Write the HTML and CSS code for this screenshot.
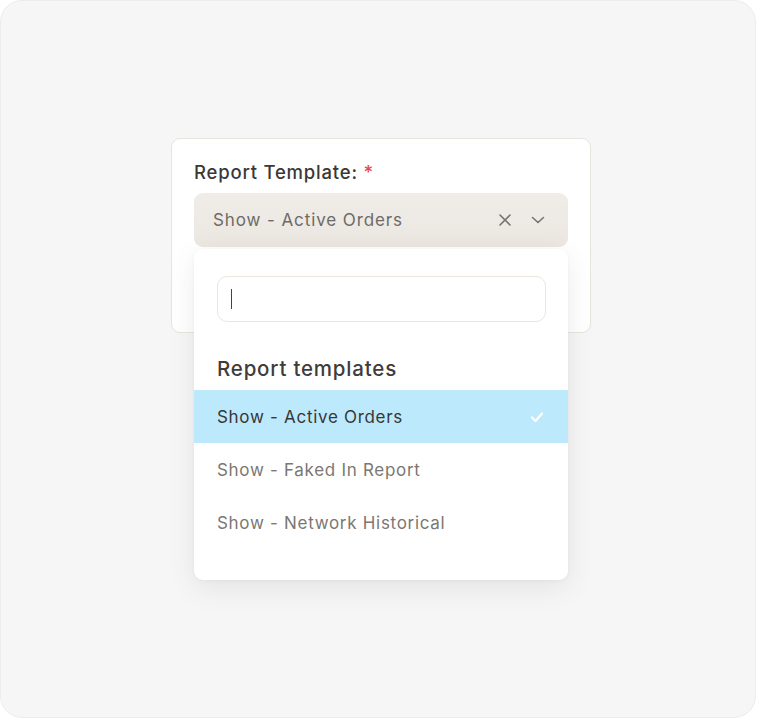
FILE: index.html
```html
<!DOCTYPE html>
<html>
  <head>
    <meta charset="utf-8">
    <link rel="stylesheet" href="styles.css">
  </head>
  <body>
    <div class="frame">
      <div class="field-card">
        <label class="field-label">Report Template: <span class="req">*</span></label>
        <div class="select">
          <span class="select-value">Show - Active Orders</span>
          <span class="select-icons">
            <svg width="14" height="14" viewBox="0 0 14 14"><path d="M2 2 L12 12 M12 2 L2 12" stroke="#77726d" stroke-width="1.6" fill="none" stroke-linecap="round"/></svg>
            <svg width="16" height="16" viewBox="0 0 16 16"><path d="M2.5 5.5 L8 10.5 L13.5 5.5" stroke="#77726d" stroke-width="1.6" fill="none" stroke-linecap="round" stroke-linejoin="round"/></svg>
          </span>
        </div>
        <div class="menu">
          <div class="search"><span class="caret"></span></div>
          <div class="group-title">Report templates</div>
          <div class="option selected">
            <span>Show - Active Orders</span>
            <svg width="14" height="12" viewBox="0 0 14 12"><path d="M2 6.5 L5.5 10 L12 2.5" stroke="#fff" stroke-width="2.2" fill="none" stroke-linecap="round" stroke-linejoin="round"/></svg>
          </div>
          <div class="option">Show - Faked In Report</div>
          <div class="option">Show - Network Historical</div>
        </div>
      </div>
    </div>
  </body>
</html>
```

FILE: styles.css
```css
body {
  margin: 0;
  background: #fff;
  font-family: Inter, "Noto Sans", sans-serif;
}

.frame {
  width: 756px;
  height: 718px;
  background: #f6f6f6;
  border: 1px solid #ececec;
  border-radius: 22px;
  padding-top: 137px;
  box-sizing: border-box;
}

.field-card {
  position: relative;
  width: 420px;
  height: 195px;
  margin-left: 170px;
  background: #fff;
  border: 1px solid #e8e4de;
  border-radius: 9px;
  box-sizing: border-box;
  padding: 22px 22px 0 22px;
}

.field-label {
  display: block;
  font-size: 18.5px;
  font-weight: 500;
  letter-spacing: 0.8px;
  color: #3b3836;
  margin-bottom: 10px;
  line-height: 22px;
}

.req {
  color: #e5484d;
}

.select {
  display: flex;
  align-items: center;
  justify-content: space-between;
  height: 54px;
  padding: 0 22px 0 19px;
  border-radius: 9px;
  background: linear-gradient(#f0ede9, #ebe6e0);
}

.select-value {
  font-size: 17px;
  letter-spacing: 0.9px;
  color: #6e6a66;
}

.select-icons {
  display: flex;
  align-items: center;
  gap: 18px;
}

.menu {
  position: absolute;
  left: 22px;
  top: 110px;
  width: 374px;
  height: 331px;
  background: #fff;
  border-radius: 9px;
  box-shadow: 0 8px 30px rgba(0, 0, 0, 0.08), 0 1px 4px rgba(0, 0, 0, 0.04);
  padding-top: 27px;
  box-sizing: border-box;
}

.search {
  display: flex;
  align-items: center;
  height: 46px;
  margin: 0 22px 0 23px;
  border: 1px solid #ece6dc;
  border-radius: 10px;
  box-sizing: border-box;
  padding-left: 13px;
}

.caret {
  width: 1px;
  height: 20px;
  background: #444;
}

.group-title {
  font-size: 20.5px;
  font-weight: 500;
  letter-spacing: 0.8px;
  color: #3f3c3a;
  line-height: 24px;
  padding: 35px 0 9px 23px;
}

.option {
  display: flex;
  align-items: center;
  justify-content: space-between;
  height: 53px;
  padding: 0 24px 0 23px;
  font-size: 17px;
  letter-spacing: 0.7px;
  color: #7b7772;
}

.option.selected {
  background: #bde9fd;
  color: #383634;
}
```
